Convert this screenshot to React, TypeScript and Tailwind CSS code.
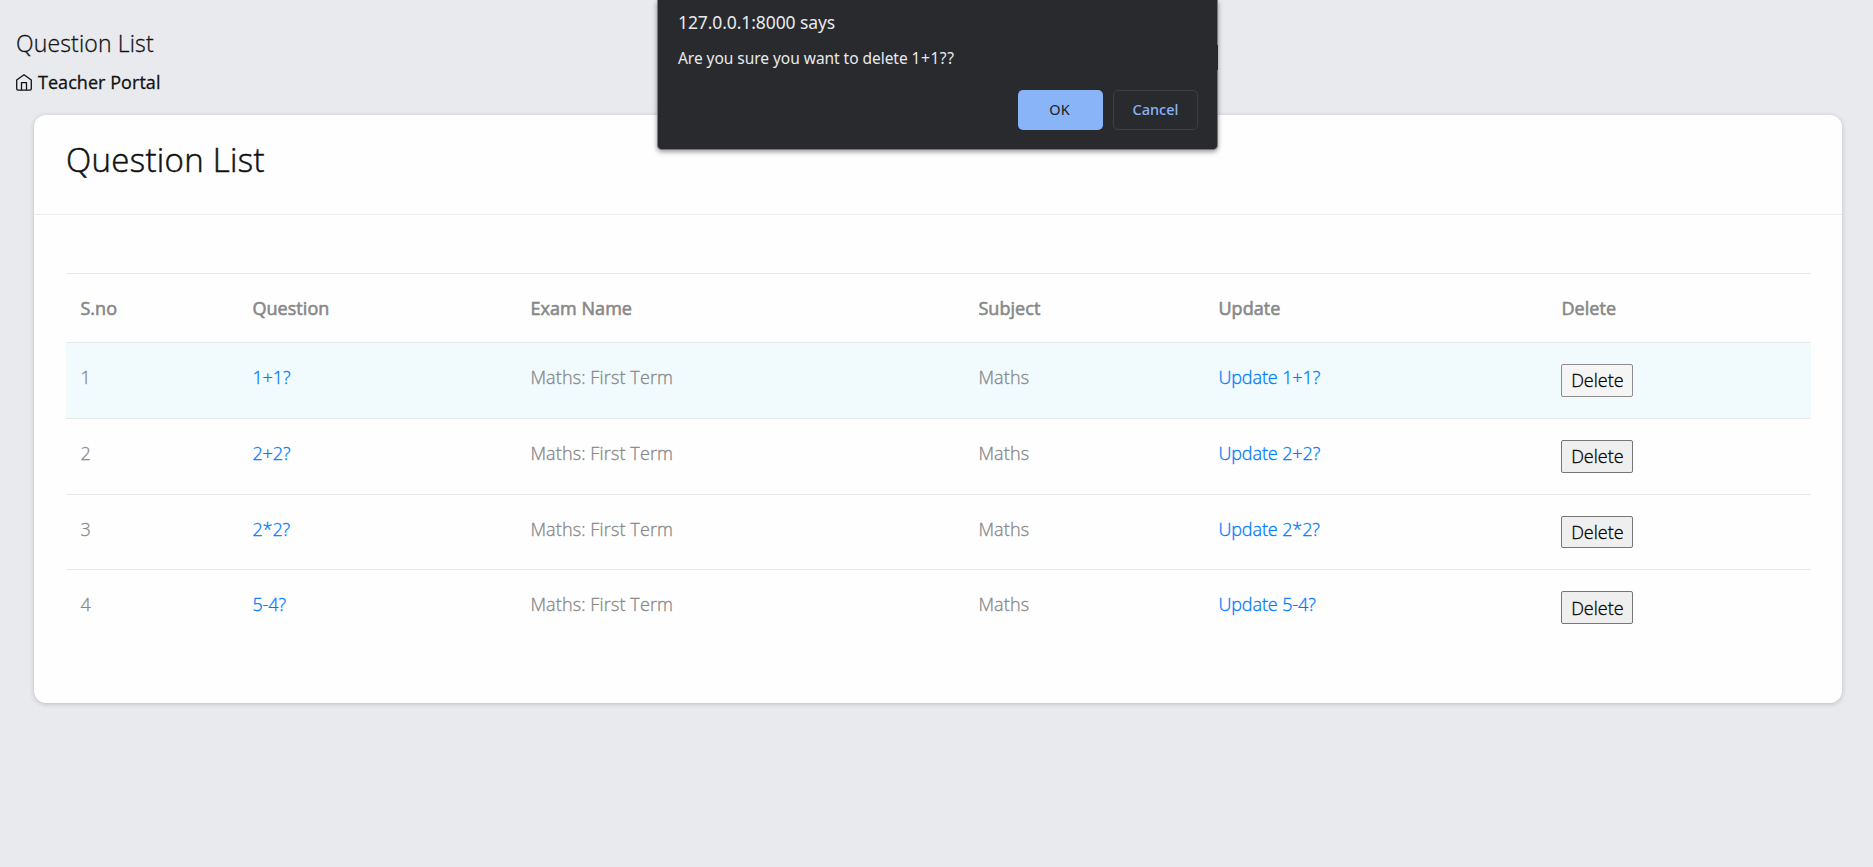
const rows = [
  { id: 1, question: "1+1?", button: "h-[33px] border-[#8d8d8d] bg-[#f5f5f5]" },
  { id: 2, question: "2+2?", button: "h-[33px] border-[#767676] bg-[#efefef]" },
  { id: 3, question: "2*2?", button: "h-8 border-[#767676] bg-[#efefef]" },
  { id: 4, question: "5-4?", button: "h-[33px] border-[#767676] bg-[#efefef] pt-px" },
];

const columns = ["S.no", "Question", "Exam Name", "Subject", "Update", "Delete"];

function HomeIcon() {
  return (
    <svg width="16" height="17" viewBox="0 0 16 17" fill="none" stroke="#111" strokeWidth="1.3" strokeLinejoin="round">
      <path d="M.7 6 8 .8 15.300 6v8.800a1.400 1.400 0 0 1-1.400 1.400H2.100A1.400 1.400 0 0 1 .7 14.800z" />
      <path d="M5.500 16V8.700h5V16" />
    </svg>
  );
}

function ConfirmDialog() {
  return (
    <div
      role="dialog"
      className="absolute top-0 left-[657px] h-[150px] w-[561px] rounded-b-[5px] border border-t-0 border-[#77787b] bg-[#292a2d] px-5 font-['Noto_Sans',sans-serif] font-normal text-[#e8eaed] shadow-[0_2px_5px_rgba(0,0,0,0.4)] [-webkit-text-stroke:0]"
    >
      <span className="absolute top-[45px] -right-px h-[25px] w-px bg-[#292a2d]" />
      <p className="pt-[10px] text-[17.5px] leading-6 tracking-[-0.1px]">127.0.0.1:8000 says</p>
      <p className="pt-[13px] text-[15.5px] leading-[22px] tracking-[-0.04px]">
        Are you sure you want to delete <span className="tracking-[0.55px]">1+1??</span>
      </p>
      <div className="mt-[21px] -mr-[1px] flex justify-end gap-[10px] text-[14.500px] font-medium">
        <button className="h-10 w-[85px] rounded-[5px] bg-[#8ab4f8] pr-0.5 font-normal text-[#202124]">OK</button>
        <button className="h-10 w-[85px] rounded-[5px] border border-[#3c4043] text-[#8ab4f8]">Cancel</button>
      </div>
    </div>
  );
}

export default function App() {
  return (
    <div className="relative h-[867px] w-full overflow-hidden bg-[#e9eaee] font-['Open_Sans',sans-serif] font-light text-[#111] [-webkit-text-stroke:0.3px]">
      <header className="h-[115px] pt-[27px] pl-4">
        <h1 className="text-[23px] leading-8 tracking-[0.15px]">Question List</h1>
        <div className="mt-[11px] flex items-center gap-[6px] text-[18px] leading-6 font-medium tracking-[0.05px]">
          <HomeIcon />
          <span>Teacher Portal</span>
        </div>
      </header>
      <main className="mr-[31px] ml-[34px] h-[588px] rounded-[12px] bg-[#fefefe] shadow-[0_1px_5px_rgba(0,0,0,0.2)]">
        <div className="h-[100px] border-b border-[#ededef] px-8 pt-[22px]">
          <h2 className="text-[33px] leading-[45px] tracking-[0.3px] [-webkit-text-stroke:0.5px]">Question List</h2>
        </div>
        <div className="px-8 pr-[31px] pt-[58px]">
          <table className="w-full table-fixed text-left text-[18px] leading-[27px] text-[#888]">
            <colgroup>
              <col className="w-[172px]" />
              <col className="w-[278px]" />
              <col className="w-[448px]" />
              <col className="w-[240px]" />
              <col className="w-[343px]" />
              <col />
            </colgroup>
            <thead>
              <tr className="h-[69px] border-t border-[#e9e9e9]">
                {columns.map((c) => (
                  <th key={c} className="px-[14.400px] font-medium tracking-[0.06px] [-webkit-text-stroke:0.6px]">{c}</th>
                ))}
              </tr>
            </thead>
            <tbody>
              {rows.map((r) => (
                <tr key={r.id} className="h-[76px] border-t border-[#e9e9e9] align-top first:bg-[#f1fafd] nth-3:h-[75px]">
                  <td className="px-[14.400px] pt-[21px]">{r.id}</td>
                  <td className="px-[14.400px] pt-[21px]"><a className="tracking-[-0.1px] text-[#007bff]">{r.question}</a></td>
                  <td className="px-[14.400px] pt-[21px] tracking-[0.13px]">Maths: First Term</td>
                  <td className="px-[14.400px] pt-[21px] tracking-[0.13px]">Maths</td>
                  <td className="px-[14.400px] pt-[21px]"><a className="tracking-[-0.1px] text-[#007bff]">Update {r.question}</a></td>
                  <td className="px-[14.400px] pt-[21px]">
                    <button className={`block w-[72px] rounded-[2px] border text-black ${r.button}`}>Delete</button>
                  </td>
                </tr>
              ))}
            </tbody>
          </table>
        </div>
      </main>
      <ConfirmDialog />
    </div>
  );
}
